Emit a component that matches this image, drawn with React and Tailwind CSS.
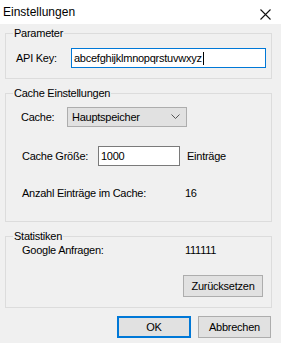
import React from 'react';

const font = { fontFamily: '"Liberation Sans", Arial, sans-serif' };

const Group = ({ title, className, children }) => (
  <fieldset className={`ml-[5px] w-[267px] border border-[#dcdcdc] ${className}`}>
    <legend className="ml-[7px] px-[1px] leading-[14px]">{title}</legend>
    {children}
  </fieldset>
);

const Settings = () => {
  return (
    <div className="w-[281px] h-[343px] bg-[#f0f0f0] text-[11px] tracking-[-0.25px] text-black" style={font}>
      {/* title bar */}
      <div className="h-[24px] bg-white flex items-center justify-between pl-[3px] pr-[10px]">
        <span className="text-[12px] tracking-normal">Einstellungen</span>
        <svg width="11" height="11" viewBox="0 0 11 11" className="mt-[4px]">
          <path d="M0.5 0.5 L10.5 10.5 M10.5 0.5 L0.5 10.5" stroke="#111" strokeWidth="1.1" />
        </svg>
      </div>

      <Group title="Parameter" className="mt-[2px] pt-[8px] pb-[10px]">
        <div className="flex items-center ml-[10px]">
          <span className="w-[55px]">API Key:</span>
          <div className="w-[195px] h-[20px] bg-white border border-[#0078d7] flex items-center pl-[2px]">
            <span>abcefghijklmnopqrstuvwxyz</span>
            <span className="w-[1px] h-[13px] bg-black ml-[1px]"></span>
          </div>
        </div>
      </Group>

      <Group title="Cache Einstellungen" className="mt-[7px] pt-[7px] pb-[21px]">
        <div className="flex items-center ml-[15px]">
          <span className="w-[46px]">Cache:</span>
          <div className="w-[120px] h-[20px] bg-[#e1e1e1] border border-[#adadad] flex items-center justify-between pl-[4px] pr-[6px]">
            <span>Hauptspeicher</span>
            <svg width="9" height="6" viewBox="0 0 9 6">
              <path d="M0.5 0.5 L4.5 4.5 L8.5 0.5" fill="none" stroke="#555" strokeWidth="1" />
            </svg>
          </div>
        </div>
        <div className="flex items-center ml-[16px] mt-[19px]">
          <span className="w-[76px]">Cache Größe:</span>
          <div className="w-[82px] h-[20px] bg-white border border-[#7a7a7a] flex items-center pl-[2px]">1000</div>
          <span className="ml-[7px]">Einträge</span>
        </div>
        <div className="flex items-center h-[14px] ml-[16px] mt-[20px]">
          <span className="w-[163px]">Anzahl Einträge im Cache:</span>
          <span>16</span>
        </div>
      </Group>

      <Group title="Statistiken" className="mt-[7px] pb-[10px]">
        <div className="flex items-center h-[14px] ml-[16px]">
          <span className="w-[163px]">Google Anfragen:</span>
          <span>111111</span>
        </div>
        <div className="flex justify-end mt-[18px] mr-[8px]">
          <button className="w-[80px] h-[22px] bg-[#e1e1e1] border border-[#adadad]">Zurücksetzen</button>
        </div>
      </Group>

      <div className="flex justify-end gap-[7px] mt-[8px] pr-[10px]">
        <button className="w-[74px] h-[22px] bg-[#e1e1e1] border-2 border-[#0078d7]">OK</button>
        <button className="w-[73px] h-[22px] bg-[#e1e1e1] border border-[#adadad]">Abbrechen</button>
      </div>
    </div>
  );
};

export default function App() {
  return <Settings />;
}
